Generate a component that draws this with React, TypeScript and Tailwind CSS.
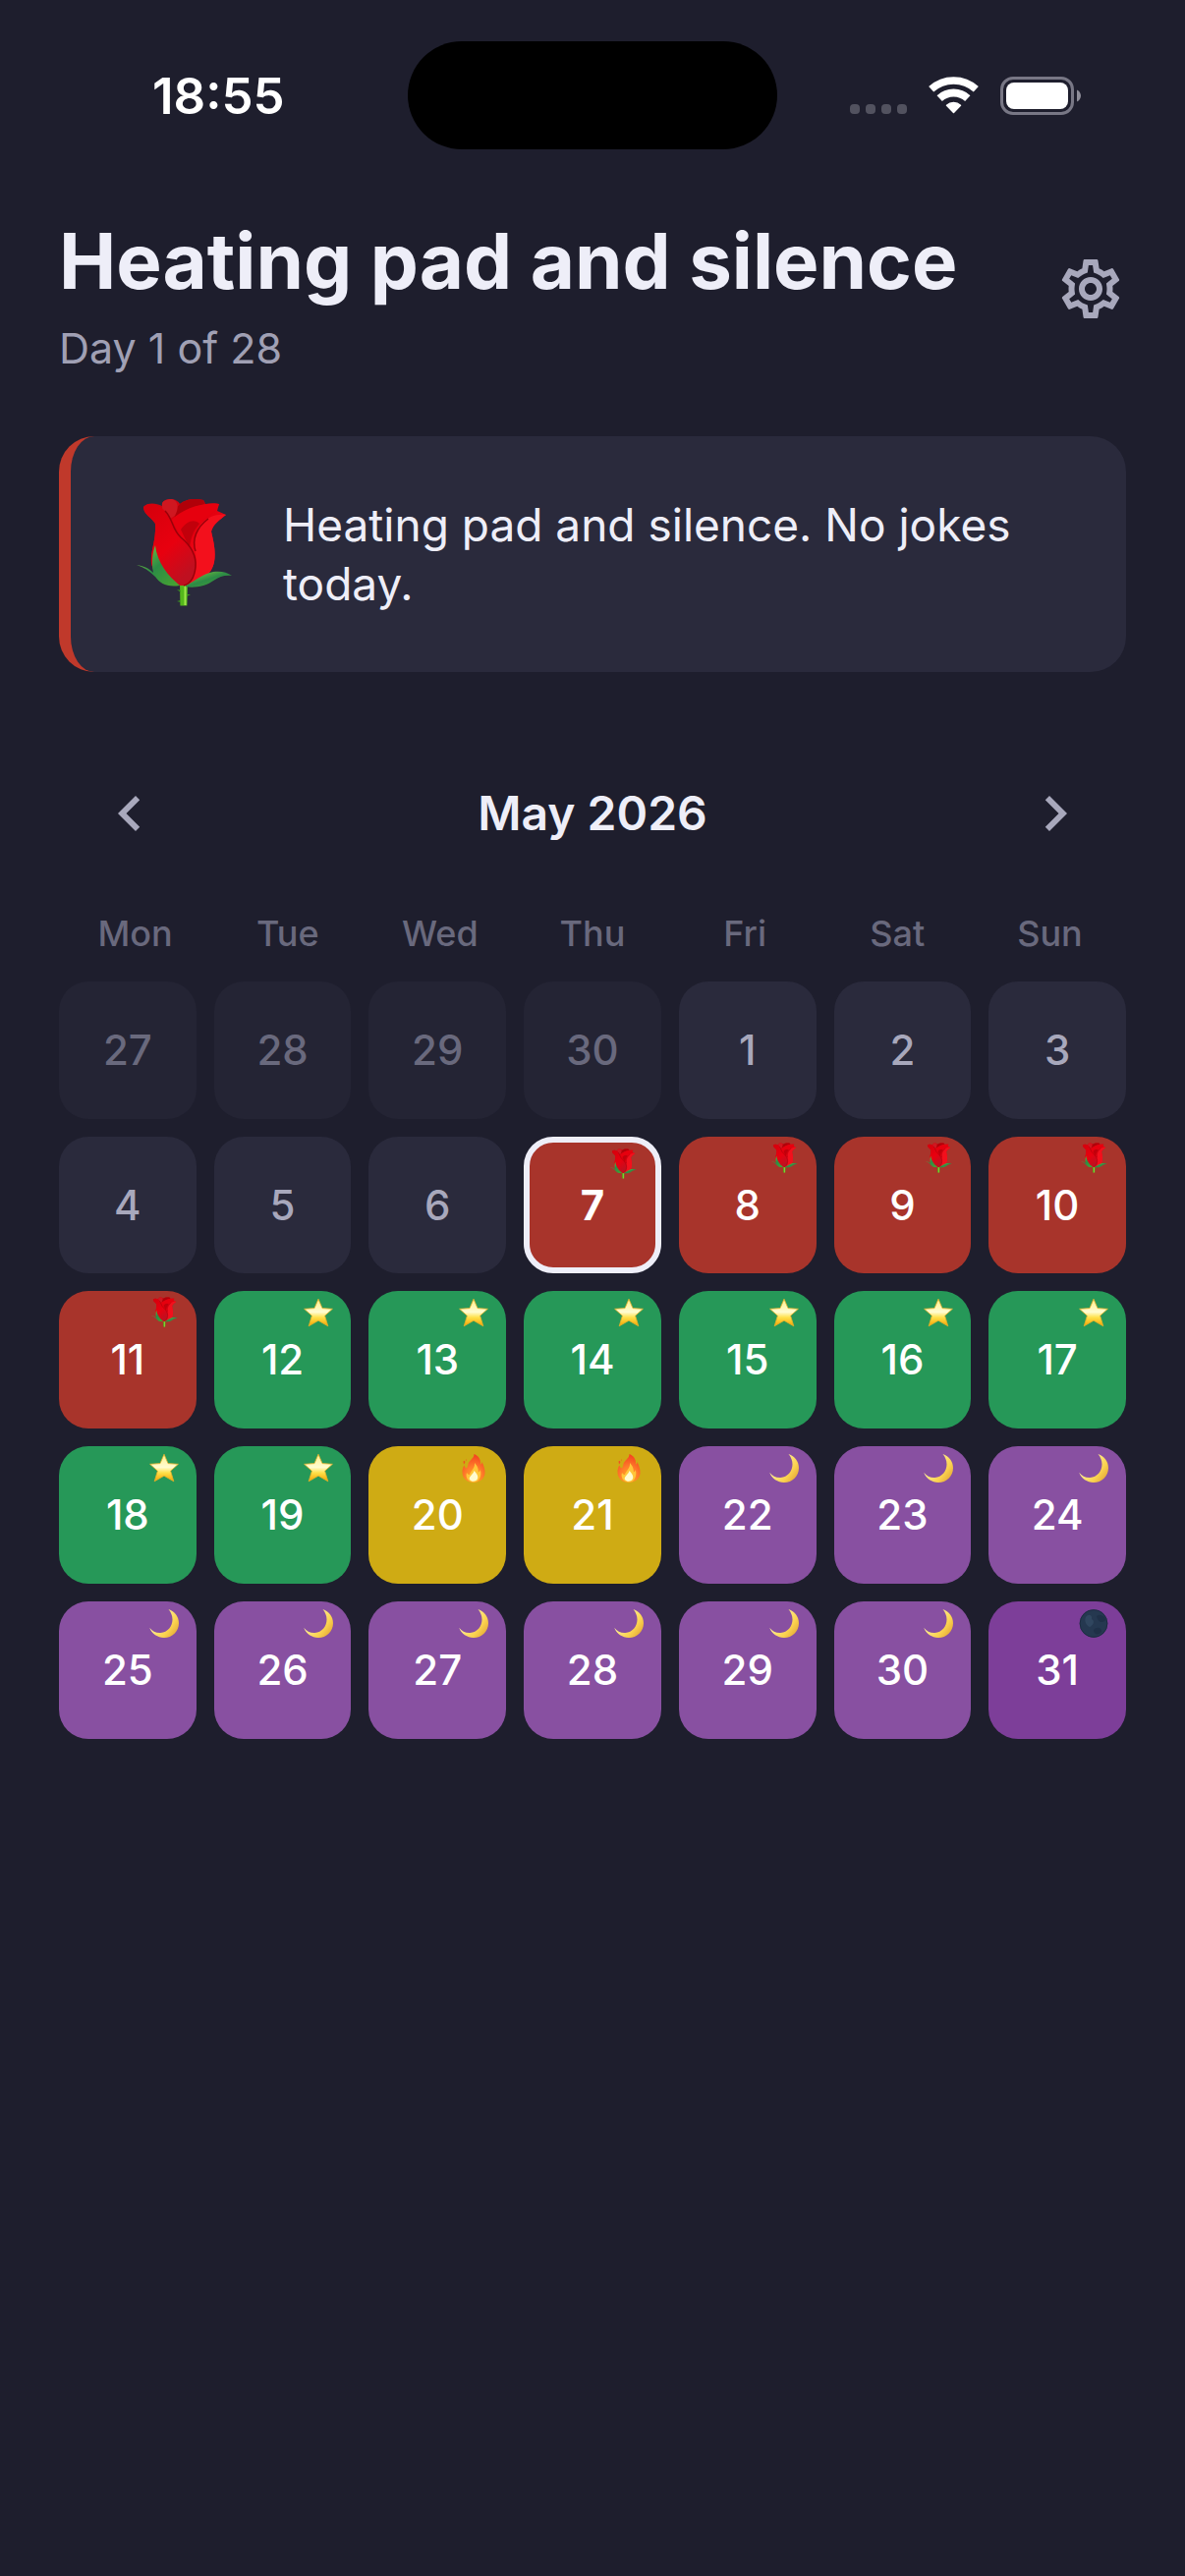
import { useId, type ReactNode } from "react";
import { MdChevronLeft, MdChevronRight, MdOutlineSettings } from "react-icons/md";

type Phase = "none" | "outside" | "period" | "energy" | "ovulation" | "luteal" | "pms";

type Day = { day: number; phase: Phase; selected?: boolean };

const range = (from: number, to: number, phase: Phase): Day[] =>
  Array.from({ length: to - from + 1 }, (_, i) => ({ day: from + i, phase }));

const days: Day[] = [
  ...range(27, 30, "outside"),
  ...range(1, 6, "none"),
  { day: 7, phase: "period", selected: true },
  ...range(8, 11, "period"),
  ...range(12, 19, "energy"),
  ...range(20, 21, "ovulation"),
  ...range(22, 30, "luteal"),
  { day: 31, phase: "pms" },
];

const weekdays = ["Mon", "Tue", "Wed", "Thu", "Fri", "Sat", "Sun"];

const phaseClass: Record<Phase, string> = {
  none: "bg-[#2a2a3c] text-[#a8a8bc]",
  outside: "bg-[#242434] text-[#69697d]",
  period: "bg-[#a8342b] text-white",
  energy: "bg-[#269858] text-white",
  ovulation: "bg-[#cfab14] text-white",
  luteal: "bg-[#8850a1] text-white",
  pms: "bg-[#7d3e99] text-white",
};

function Rose({ className }: { className: string }) {
  const id = useId();
  return (
    <svg viewBox="0 0 108 108" className={className} aria-hidden="true">
      <defs>
        <linearGradient id={`${id}a`} x1="0" y1="0" x2="1" y2="1">
          <stop offset="0" stopColor="#c4060f" />
          <stop offset="0.5" stopColor="#e3000f" />
          <stop offset="1" stopColor="#ff1a2a" />
        </linearGradient>
        <linearGradient id={`${id}b`} x1="0" y1="0" x2="0.6" y2="1">
          <stop offset="0" stopColor="#d4000c" />
          <stop offset="0.6" stopColor="#e8000f" />
          <stop offset="1" stopColor="#bf1020" />
        </linearGradient>
        <linearGradient id={`${id}c`} x1="0" y1="0" x2="1" y2="1">
          <stop offset="0" stopColor="#8fcf3c" />
          <stop offset="0.5" stopColor="#2c8c46" />
          <stop offset="1" stopColor="#4aa52f" />
        </linearGradient>
      </defs>
      <path d="M51 82h8l-.6 24.500h-7z" fill="#55b81c" />
      <path d="M55.500 84h2v22h-2z" fill="#9ce548" />
      <path d="M48 90l4 1v2zM62 95l-4 0v2zM48 102l4-1v2z" fill="#3f9a20" />
      <path
        d="M14 6C18 1 27 2 33 5C32 0 37 -2 43 -2C48 -1 50 1 51 3C57 -2 66 -3 75 -1L77 3C82 2 88 2 91 3L89 10L98 14C92 19 85 23 83 31C85 40 88 51 86 62C83 76 69 84 55 86C39 85 25 78 22 63C21 50 27 41 26 23C23 17 14 14 14 6Z"
        fill={`url(#${id}a)`}
      />
      <path d="M51 3C57 -2 66 -3 75 -1L77 3C66 5 57 10 49 19C43 17 45 9 51 3Z" fill="#b00009" />
      <path d="M33 5C32 0 37 -2 43 -2C50 0 50 8 46 15L41 18C35 15 33 11 33 5Z" fill="#cf1720" />
      <path d="M43 19C53 8 73 1 91 3C88 12 77 15 71 23C64 30 61 38 61 48C56 39 49 33 43 19Z" fill="#e6000e" />
      <path d="M71 23C66 18 58 20 52 29L61 48C62 37 65 30 71 23Z" fill="#c1000b" />
      <path d="M98 14C88 13 79 16 72 24C65 33 64 42 67 53C69 64 68 76 60 85C73 83 84 74 86 62C88 51 85 40 83 31C85 23 92 19 98 14Z" fill="#f3101c" />
      <path d="M14 6C18 1 29 2 36 10C44 18 43 29 52 37C63 46 68 55 67 67C66 77 62 84 55 86C39 85 25 78 22 63C21 50 27 41 26 23C23 17 14 14 14 6Z" fill={`url(#${id}b)`} />
      <path d="M36 10C44 18 43 29 52 37C63 46 68 55 67 67C66 77 62 84 55 86M67 51C63 39 68 27 80 18" fill="none" stroke="#9a0009" strokeWidth="1.500" />
      <path d="M7 65C14 66 19 68 24 73C22 63 23 53 26 45C28 63 39 76 51 86C38 88 31 84 26 77C20 71 14 67 7 65Z" fill={`url(#${id}c)`} />
      <path d="M56 87C66 81 75 74 85 72C92 71 99 72 104 76C90 74 84 84 75 86C68 88 61 88 56 87Z" fill={`url(#${id}c)`} />
    </svg>
  );
}

function Star() {
  const id = useId();
  return (
    <svg viewBox="0 0 30 30" className="size-[30px]" aria-hidden="true">
      <defs>
        <linearGradient id={id} x1="0" y1="0" x2="0" y2="1">
          <stop offset="0" stopColor="#fff08a" />
          <stop offset="0.480" stopColor="#fffcd0" />
          <stop offset="0.680" stopColor="#ffe14a" />
          <stop offset="1" stopColor="#f5a300" />
        </linearGradient>
      </defs>
      <path
        d="M15 1.200L19 10.600L29.400 11.300L21.600 18.200L24.800 28.800L15 23.200L5.200 28.800L8.400 18.200L.6 11.300L11 10.600Z"
        fill={`url(#${id})`}
        stroke="#e3b02a"
        strokeWidth="0.800"
        strokeLinejoin="round"
      />
    </svg>
  );
}

function Fire() {
  const id = useId();
  return (
    <svg viewBox="0 0 30 30" className="size-[30px]" aria-hidden="true">
      <defs>
        <radialGradient id={id} cx="0.500" cy="0.850" r="0.850">
          <stop offset="0" stopColor="#ffb31f" />
          <stop offset="0.500" stopColor="#ff7a2a" />
          <stop offset="1" stopColor="#f2401f" />
        </radialGradient>
      </defs>
      <path
        d="M15.500 1C20 3 22.500 6.500 22 11C22.500 12 23.200 11 23.500 9C25.500 13 26.800 17 26.500 20.500C26 26.500 21 30 15 30C8.500 30 4 26 3.600 20.500C3.300 17 4 14.500 5.500 12.500C6 14 6.500 15 7.500 15.500C8.500 15 9 13.500 9.300 12C10 7 15.500 6 15.500 1Z"
        fill={`url(#${id})`}
      />
      <path d="M4.500 8.500l1.500-.7.300 2-1.300 1.700zM7 6.500l1 .3-.4 1.500z" fill="#f2501f" />
      <path d="M16 10C19.500 14 20 17 19.800 19.500C21 19 21.500 18 21.800 17C23.500 23 21 29.500 15 29.500C9.500 29.500 6.500 25 8 20C9 21.500 9.700 22 11 22C12 18 16.500 15.500 16 10Z" fill="#ffc63a" />
      <path d="M15.500 18C18 21 20 23 19 26C18 29 13 30 11 27C9.500 24 14.500 22 15.500 18Z" fill="#fffbd0" />
    </svg>
  );
}

function Crescent() {
  const id = useId();
  return (
    <svg viewBox="0 0 30 30" className="size-[30px]" aria-hidden="true">
      <defs>
        <linearGradient id={id} x1="0.200" y1="0.300" x2="1" y2="0.900">
          <stop offset="0" stopColor="#fff3a0" />
          <stop offset="0.600" stopColor="#fbd350" />
          <stop offset="1" stopColor="#e0a030" />
        </linearGradient>
      </defs>
      <path
        d="M19.500 1C26 3.200 30 8.800 30 15.200C30 23.500 23.300 30 15 30C8.500 30 2.500 26 .2 19.800C3 23.500 7 25.300 11.500 25C18.500 24.500 23.500 18.500 23.500 11.500C23.500 7.500 22 4 19.500 1Z"
        fill={`url(#${id})`}
      />
    </svg>
  );
}

function NewMoon() {
  return (
    <svg viewBox="0 0 30 30" className="size-[30px]" aria-hidden="true">
      <circle cx="15" cy="15.500" r="14.200" fill="#253850" />
      <path d="M7 9C10 5 14 7 13 11C17 13 14 18 11 19C8 18 5 13 7 9Z" fill="#30465f" />
      <path d="M18 8C21 5 27 8 27 12C24 16 19 14 18 8ZM15 22C18 18 24 20 23 24C20 28 15 27 15 22Z" fill="#1f3047" />
      <circle cx="15" cy="15.500" r="13.900" fill="none" stroke="#1c2a3f" strokeWidth="0.800" />
    </svg>
  );
}

const phaseIcon: Record<Phase, ReactNode> = {
  none: null,
  outside: null,
  period: <Rose className="size-[30px] overflow-visible" />,
  energy: <Star />,
  ovulation: <Fire />,
  luteal: <Crescent />,
  pms: <NewMoon />,
};

function DayCell({ day, phase, selected }: Day) {
  return (
    <button
      type="button"
      aria-pressed={!!selected}
      className={`relative flex aspect-square items-center justify-center rounded-[30px] text-[42px] leading-none ${phaseClass[phase]} ${
        selected ? "border-6 border-[#eeeef8] font-bold" : "font-medium"
      }`}
    >
      {day}
      <span className="absolute top-[7px] right-[18px]">{phaseIcon[phase]}</span>
    </button>
  );
}

function StatusBar() {
  return (
    <div className="flex items-center pt-[42px] text-white">
      <div className="flex flex-1 justify-center pl-[30px] text-[51px] leading-none font-semibold">18:55</div>
      <div className="h-[110px] w-[376px] rounded-full bg-black" />
      <div className="flex flex-1 items-center justify-center gap-[22px] pr-[31px]">
        <div className="flex gap-[6px] pt-[28px]">
          {[0, 1, 2, 3].map((dot) => (
            <span key={dot} className="size-[10px] rounded-[4px] bg-[#52525f]" />
          ))}
        </div>
        <svg viewBox="0 0 51 38" className="h-[38px] w-[51px]" fill="none" stroke="currentColor" aria-label="Wi-Fi">
          <path d="M2.700 12.800A33.800 33.800 0 0 1 48.300 12.800" strokeWidth="7.500" />
          <path d="M11.200 22.100A21 21 0 0 1 39.800 22.100" strokeWidth="7.800" />
          <path d="M25.500 36.500L18.500 29.200A10.500 10.500 0 0 1 32.500 29.200Z" fill="currentColor" strokeWidth="1.500" strokeLinejoin="round" />
        </svg>
        <svg viewBox="0 0 82 39" className="h-[39px] w-[82px]" aria-label="Battery">
          <rect x="1.500" y="1.500" width="72" height="36" rx="11.500" fill="none" stroke="#787785" strokeWidth="3" />
          <rect x="6" y="6" width="63" height="27" rx="8" fill="white" />
          <path d="M78 13.500C80.500 14.500 82 17 82 19.500C82 22 80.500 24.500 78 25.500Z" fill="#8e8d99" />
        </svg>
      </div>
    </div>
  );
}

export default function App() {
  return (
    <div className="min-h-screen bg-[#1e1e2d] font-['Inter',sans-serif] text-[#eeeef8]">
      <StatusBar />
      <main className="px-[60px] pt-[54px]">
        <header className="flex items-center justify-between">
          <div>
            <h1 className="text-[78px] leading-[120px] font-bold">Heating pad and silence</h1>
            <p className="text-[43px] leading-[56px] text-[#a0a0b4]">Day 1 of 28</p>
          </div>
          <button type="button" aria-label="Settings" className="text-[#a8a8bc]">
            <MdOutlineSettings className="size-[72px]" />
          </button>
        </header>

        <section className="mt-[62px] flex items-center gap-12 rounded-[36px] border-l-12 border-[#c0392b] bg-[#2a2a3c] p-[60px]">
          <Rose className="size-[108px] shrink-0 overflow-visible" />
          <p className="text-[46px] leading-[60px]">Heating pad and silence. No jokes today.</p>
        </section>

        <section className="mt-[72px]">
          <div className="flex items-center justify-between">
            <button type="button" aria-label="Previous month" className="grid size-36 place-items-center text-[#a8a8bc]">
              <MdChevronLeft className="size-[72px]" />
            </button>
            <h2 className="text-[48px] leading-[60px] font-semibold">May 2026</h2>
            <button type="button" aria-label="Next month" className="grid size-36 place-items-center text-[#a8a8bc]">
              <MdChevronRight className="size-[72px]" />
            </button>
          </div>
          <div className="mt-7 grid grid-cols-7 text-center text-[36px] leading-[44px] font-medium text-[#69697d]">
            {weekdays.map((name) => (
              <span key={name}>{name}</span>
            ))}
          </div>
          <div className="mt-[27px] grid grid-cols-7 gap-[18px]">
            {days.map((d, i) => (
              <DayCell key={i} {...d} />
            ))}
          </div>
        </section>
      </main>
    </div>
  );
}
